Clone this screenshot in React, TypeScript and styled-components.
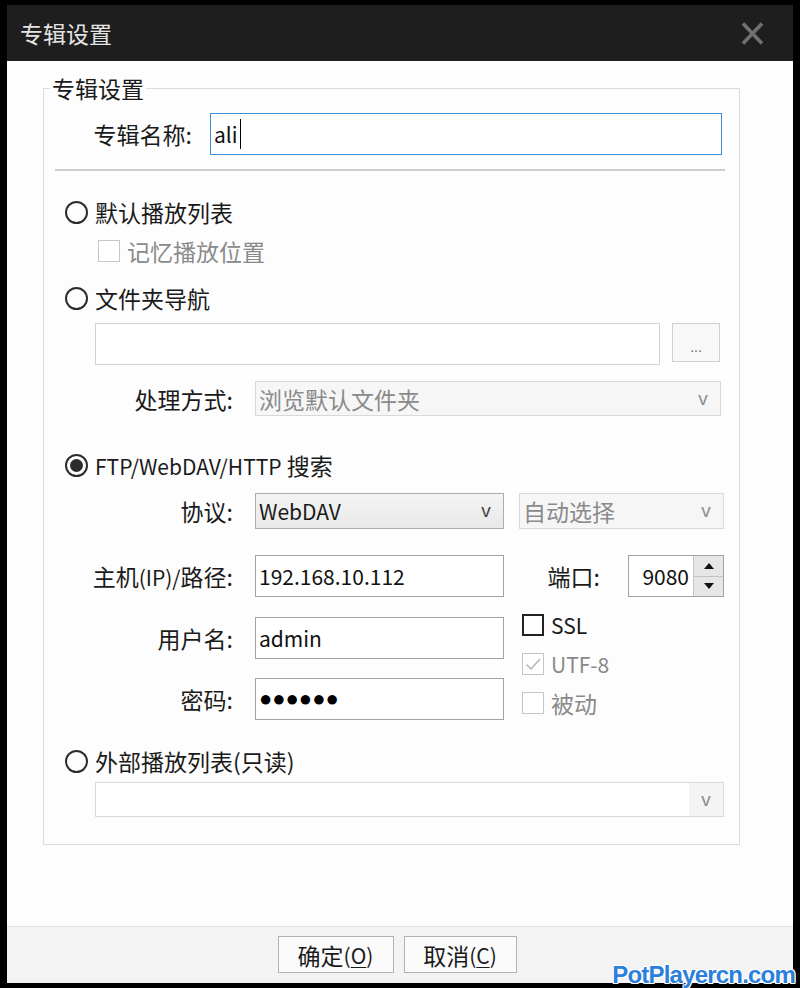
import React from "react";
import styled, { createGlobalStyle } from "styled-components";

const Global = createGlobalStyle`
  html, body { margin: 0; padding: 0; background: #000; }
  body { font-family: "Noto Sans CJK SC", "Noto Sans", sans-serif; color: #1a1a1a; }
  * { box-sizing: border-box; }
`;

const Frame = styled.div`
  position: relative;
  width: 800px;
  height: 988px;
  background: #000;
  padding: 5px 7px 5px 7px;
  display: flex;
  flex-direction: column;
`;

const TitleBar = styled.div`
  height: 56px;
  flex: none;
  background: #1e1e1e;
  display: flex;
  align-items: center;
  justify-content: space-between;
  padding: 0 29px 0 13px;
  color: #e4e4e4;
  font-size: 23px;
  line-height: 30px;
`;

const CloseIcon = styled.svg`
  width: 23px;
  height: 23px;
  display: block;
`;

const Client = styled.div`
  flex: 1;
  background: #fdfdfd;
  padding: 14px 53px 0 36px;
`;

const Group = styled.fieldset`
  margin: 0;
  padding: 0 0 27px 0;
  border: 1px solid #dcdcdc;
  display: flex;
  flex-direction: column;
`;

const Legend = styled.legend`
  margin-left: 6px;
  padding: 0 2px;
  font-size: 23px;
  line-height: 26px;
  color: #1a1a1a;
`;

const Latin = styled.span`
  font-size: 21px;
`;

const Row = styled.div<{ $top: number; $h: number; $indent?: number }>`
  display: flex;
  align-items: center;
  margin-top: ${(p) => p.$top}px;
  height: ${(p) => p.$h}px;
  padding-left: ${(p) => p.$indent ?? 0}px;
  font-size: 23px;
  line-height: 30px;
`;

const Label = styled.div<{ $w: number; $gap: number }>`
  width: ${(p) => p.$w}px;
  margin-right: ${(p) => p.$gap}px;
  text-align: right;
  font-size: 23px;
  line-height: 30px;
  color: #1a1a1a;
  white-space: nowrap;
  flex: none;
`;

const TextBox = styled.div<{ $w: number; $h?: number; $focus?: boolean; $light?: boolean }>`
  width: ${(p) => p.$w}px;
  height: ${(p) => p.$h ?? 42}px;
  flex: none;
  background: #fff;
  border: 1px solid ${(p) => (p.$focus ? "#3d8fd6" : p.$light ? "#d2d2d2" : "#a3a3a3")};
  display: flex;
  align-items: center;
  padding-left: 3px;
  font-size: 21px;
  line-height: 30px;
  color: #111;
  white-space: nowrap;
`;

const Caret = styled.span`
  display: inline-block;
  width: 1px;
  height: 30px;
  background: #000;
  margin-left: 2px;
`;

const Dots = styled.span`
  font-family: "Liberation Sans", Arial, sans-serif;
  font-size: 22px;
  color: #000;
`;

const Select = styled.div<{ $w: number; $h: number; $disabled?: boolean; $plain?: boolean }>`
  width: ${(p) => p.$w}px;
  height: ${(p) => p.$h}px;
  flex: none;
  display: flex;
  align-items: stretch;
  border: 1px solid ${(p) => (p.$disabled ? "#d9d9d9" : "#adadad")};
  background: ${(p) =>
    p.$plain ? "#fff" : p.$disabled ? "#f6f6f6" : "linear-gradient(#f4f4f4, #e9e9e9)"};
  color: ${(p) => (p.$disabled ? "#8a8a8a" : "#1a1a1a")};
  font-size: 23px;
  line-height: 30px;
`;

const SelectText = styled.div`
  flex: 1;
  display: flex;
  align-items: center;
  padding-left: 3px;
  white-space: nowrap;
`;

const Arrow = styled.div<{ $disabled?: boolean; $cell?: boolean }>`
  width: 34px;
  display: flex;
  align-items: center;
  justify-content: center;
  font-family: "Liberation Sans", Arial, sans-serif;
  font-size: 19px;
  color: ${(p) => (p.$disabled ? "#8c8c8c" : "#444")};
  background: ${(p) => (p.$cell ? "#f4f4f4" : "transparent")};
`;

const BrowseButton = styled.div`
  width: 48px;
  height: 39px;
  margin-left: 12px;
  border: 1px solid #cfcfcf;
  background: #f8f8f8;
  display: flex;
  align-items: flex-end;
  justify-content: center;
  padding-bottom: 7px;
  font-family: "Liberation Sans", Arial, sans-serif;
  font-size: 14px;
  line-height: 14px;
  color: #666;
  align-self: flex-start;
`;

const Separator = styled.div`
  margin: 14px 0 0 11px;
  width: 670px;
  height: 2px;
  background: #cdcdcd;
`;

const RadioCircle = styled.span`
  width: 23px;
  height: 23px;
  border: 2px solid #2c2c2c;
  border-radius: 50%;
  display: inline-flex;
  align-items: center;
  justify-content: center;
  margin-right: 7px;
  flex: none;
`;

const RadioDot = styled.span`
  width: 13px;
  height: 13px;
  border-radius: 50%;
  background: #2c2c2c;
`;

const CheckBox = styled.span<{ $disabled?: boolean }>`
  width: 22px;
  height: 22px;
  flex: none;
  border: ${(p) => (p.$disabled ? "1.5px solid #c6c6c6" : "2px solid #222")};
  background: #fff;
  display: inline-flex;
  align-items: center;
  justify-content: center;
  margin-right: 7px;
`;

const CheckText = styled.span<{ $disabled?: boolean }>`
  color: ${(p) => (p.$disabled ? "#8a8a8a" : "#1a1a1a")};
  font-size: 23px;
  line-height: 30px;
  white-space: nowrap;
`;

const Section = styled.div`
  display: flex;
  margin-top: 13px;
`;

const LeftCol = styled.div`
  width: 460px;
  display: flex;
  flex-direction: column;
`;

const RightCol = styled.div`
  width: 205px;
  margin-left: 15px;
  display: flex;
  flex-direction: column;
`;

const CheckStack = styled.div`
  margin-top: 8px;
  padding-left: 3px;
  display: flex;
  flex-direction: column;
`;

const CheckRow = styled.div`
  height: 39px;
  display: flex;
  align-items: center;
`;

const Spinner = styled.div`
  width: 96px;
  height: 42px;
  margin-left: 28px;
  border: 1px solid #a3a3a3;
  background: #fff;
  display: flex;
`;

const SpinValue = styled.div`
  flex: 1;
  display: flex;
  align-items: center;
  justify-content: flex-end;
  padding-right: 4px;
  font-size: 21px;
  color: #111;
`;

const SpinButtons = styled.div`
  width: 30px;
  display: flex;
  flex-direction: column;
  border-left: 1px solid #c4c4c4;
`;

const SpinHalf = styled.div<{ $top?: boolean }>`
  flex: 1;
  background: #e6e6e6;
  display: flex;
  align-items: center;
  justify-content: center;
  border-bottom: ${(p) => (p.$top ? "1px solid #c4c4c4" : "none")};
`;

const Footer = styled.div`
  height: 57px;
  flex: none;
  background: #f3f3f3;
  border-top: 1px solid #e2e2e2;
  display: flex;
  justify-content: center;
  align-items: flex-start;
  padding: 9px 6px 0 0;
  gap: 10px;
`;

const Button = styled.div<{ $w: number }>`
  width: ${(p) => p.$w}px;
  height: 37px;
  border: 1px solid #b2b2b2;
  background: #fbfbfb;
  display: flex;
  align-items: center;
  justify-content: center;
  font-size: 23px;
  line-height: 30px;
  color: #1a1a1a;
`;

const Mnemonic = styled.span`
  text-decoration: underline;
  text-underline-offset: 3px;
  text-decoration-thickness: 1px;
`;

const Watermark = styled.div`
  position: absolute;
  right: 5px;
  bottom: 0px;
  font-family: "Liberation Sans", Arial, sans-serif;
  font-weight: 700;
  font-size: 24px;
  line-height: 27px;
  letter-spacing: -0.8px;
  color: #2a80dc;
  text-shadow: -1px -1px 0 #fff, 1px -1px 0 #fff, -1px 1px 0 #fff, 1px 1px 0 #fff,
    0 1px 0 #fff, 1px 0 0 #fff;
`;

const Radio = ({ checked, children }: { checked?: boolean; children: React.ReactNode }) => (
  <>
    <RadioCircle>{checked && <RadioDot />}</RadioCircle>
    <CheckText>{children}</CheckText>
  </>
);

const Check = ({
  checked,
  disabled,
  children,
}: {
  checked?: boolean;
  disabled?: boolean;
  children: React.ReactNode;
}) => (
  <>
    <CheckBox $disabled={disabled}>
      {checked && (
        <svg width="18" height="18" viewBox="0 0 18 18">
          <path d="M2.5 9.5 L7 14 L16 4" fill="none" stroke="#b0b0b0" strokeWidth="1.4" />
        </svg>
      )}
    </CheckBox>
    <CheckText $disabled={disabled}>{children}</CheckText>
  </>
);

export default function App() {
  return (
    <>
      <Global />
      <Frame>
        <TitleBar>
          <span>专辑设置</span>
          <CloseIcon viewBox="0 0 23 23">
            <path d="M2 1.5 L21 21.5 M21 1.5 L2 21.5" stroke="#707070" strokeWidth="3.6" />
          </CloseIcon>
        </TitleBar>
        <Client>
          <Group>
            <Legend>专辑设置</Legend>
            <Row $top={12} $h={42}>
              <Label $w={148} $gap={18}>专辑名称:</Label>
              <TextBox $w={512} $focus>
                ali
                <Caret />
              </TextBox>
            </Row>
            <Separator />
            <Row $top={26} $h={30} $indent={21}>
              <Radio>默认播放列表</Radio>
            </Row>
            <Row $top={9} $h={30} $indent={54}>
              <Check disabled>记忆播放位置</Check>
            </Row>
            <Row $top={17} $h={30} $indent={21}>
              <Radio>文件夹导航</Radio>
            </Row>
            <Row $top={10} $h={42} $indent={51}>
              <TextBox $w={565} $light />
              <BrowseButton>...</BrowseButton>
            </Row>
            <Row $top={16} $h={35}>
              <Label $w={189} $gap={22}>处理方式:</Label>
              <Select $w={466} $h={35} $disabled>
                <SelectText>浏览默认文件夹</SelectText>
                <Arrow $disabled>v</Arrow>
              </Select>
            </Row>
            <Row $top={34} $h={30} $indent={21}>
              <Radio checked>
                <Latin>FTP/WebDAV/HTTP</Latin> 搜索
              </Radio>
            </Row>
            <Section>
              <LeftCol>
                <Row $top={0} $h={36}>
                  <Label $w={189} $gap={22}>协议:</Label>
                  <Select $w={249} $h={36}>
                    <SelectText>
                      <Latin>WebDAV</Latin>
                    </SelectText>
                    <Arrow>v</Arrow>
                  </Select>
                </Row>
                <Row $top={26} $h={42}>
                  <Label $w={189} $gap={22}>
                    主机<Latin>(IP)/</Latin>路径:
                  </Label>
                  <TextBox $w={249}>192.168.10.112</TextBox>
                </Row>
                <Row $top={20} $h={42}>
                  <Label $w={189} $gap={22}>用户名:</Label>
                  <TextBox $w={249}>admin</TextBox>
                </Row>
                <Row $top={19} $h={42}>
                  <Label $w={189} $gap={22}>密码:</Label>
                  <TextBox $w={249}>
                    <Dots>●●●●●●</Dots>
                  </TextBox>
                </Row>
              </LeftCol>
              <RightCol>
                <Row $top={0} $h={36}>
                  <Select $w={205} $h={36} $disabled>
                    <SelectText>自动选择</SelectText>
                    <Arrow $disabled>v</Arrow>
                  </Select>
                </Row>
                <Row $top={26} $h={42}>
                  <Label $w={81} $gap={0}>端口:</Label>
                  <Spinner>
                    <SpinValue>9080</SpinValue>
                    <SpinButtons>
                      <SpinHalf $top>
                        <svg width="10" height="6" viewBox="0 0 10 6">
                          <path d="M5 0 L10 6 L0 6 Z" fill="#111" />
                        </svg>
                      </SpinHalf>
                      <SpinHalf>
                        <svg width="10" height="6" viewBox="0 0 10 6">
                          <path d="M0 0 L10 0 L5 6 Z" fill="#111" />
                        </svg>
                      </SpinHalf>
                    </SpinButtons>
                  </Spinner>
                </Row>
                <CheckStack>
                  <CheckRow>
                    <Check>
                      <Latin>SSL</Latin>
                    </Check>
                  </CheckRow>
                  <CheckRow>
                    <Check checked disabled>
                      <Latin>UTF-8</Latin>
                    </Check>
                  </CheckRow>
                  <CheckRow>
                    <Check disabled>被动</Check>
                  </CheckRow>
                </CheckStack>
              </RightCol>
            </Section>
            <Row $top={24} $h={30} $indent={21}>
              <Radio>外部播放列表(只读)</Radio>
            </Row>
            <Row $top={6} $h={35} $indent={51}>
              <Select $w={629} $h={35} $disabled $plain>
                <SelectText />
                <Arrow $disabled $cell>
                  v
                </Arrow>
              </Select>
            </Row>
          </Group>
        </Client>
        <Footer>
          <Button $w={116}>
            确定<Latin>(<Mnemonic>O</Mnemonic>)</Latin>
          </Button>
          <Button $w={113}>
            取消<Latin>(<Mnemonic>C</Mnemonic>)</Latin>
          </Button>
        </Footer>
        <Watermark>PotPlayercn.com</Watermark>
      </Frame>
    </>
  );
}
